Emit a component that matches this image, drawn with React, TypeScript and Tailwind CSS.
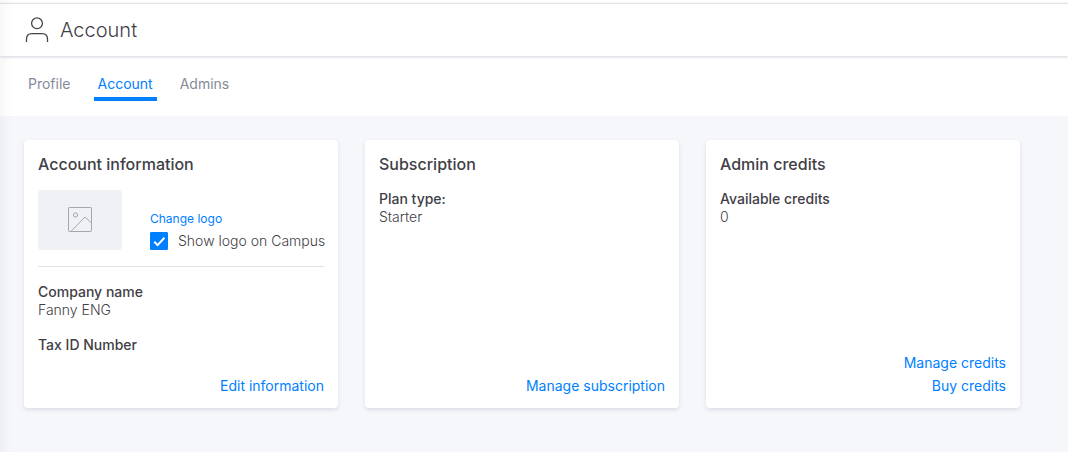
import { useState, type ReactNode } from "react";

function UserIcon() {
  return (
    <svg
      width="24"
      height="26"
      viewBox="0 0 24 26"
      fill="none"
      stroke="#43444a"
      strokeWidth="1.3"
      aria-hidden="true"
    >
      <circle cx="12" cy="6.3" r="5.4" />
      <path d="M1.5 25V22.3C1.5 18.9 3.4 16.6 6.8 16.6h10.4c3.4 0 5.3 2.3 5.3 5.7V25" />
    </svg>
  );
}

function ImageIcon() {
  return (
    <svg
      width="24"
      height="26"
      viewBox="0 0 24 26"
      fill="none"
      stroke="#a2a5b2"
      strokeWidth="1"
      aria-hidden="true"
    >
      <rect x="0.5" y="0.5" width="23" height="24" rx="0.8" />
      <circle cx="7.5" cy="8" r="2.1" />
      <path d="M3 24.3 17 10l6.5 6" />
    </svg>
  );
}

type Tab = "Profile" | "Account" | "Admins";
const tabs: Tab[] = ["Profile", "Account", "Admins"];

function Card({
  title,
  children,
  actions,
}: {
  title: string;
  children: ReactNode;
  actions: string[];
}) {
  return (
    <section className="flex min-h-[268px] flex-col rounded bg-white px-3.5 pt-3.5 pb-[11px] shadow-[0_2px_4px_rgba(30,40,80,0.12)]">
      <h2 className="mb-4 text-base leading-5 font-medium">{title}</h2>
      {children}
      <div className="mt-auto flex flex-col items-end">
        {actions.map((action) => (
          <a key={action} href="#" className="leading-[23px] font-normal text-[#0080ff]">
            {action}
          </a>
        ))}
      </div>
    </section>
  );
}

function Field({ label, value }: { label: string; value?: string }) {
  return (
    <div>
      <dt className="font-medium">{label}</dt>
      {value && <dd>{value}</dd>}
    </div>
  );
}

export default function App() {
  const [active, setActive] = useState<Tab>("Account");
  const [showLogo, setShowLogo] = useState(true);

  return (
    <div className="relative flex min-h-screen flex-col bg-[#f5f7fb] pt-[3px] font-['Inter',sans-serif] text-sm leading-[18px] font-light text-[#3f4046] before:absolute before:inset-x-0 before:top-0 before:h-[3px] before:bg-white">
      <header className="relative flex h-[53px] items-center gap-[11px] border-t border-[#dfe1e8] bg-white pl-[25px] shadow-[0_1px_3px_rgba(30,40,80,0.2)]">
        <UserIcon />
        <h1 className="text-xl leading-6 font-light">Account</h1>
      </header>

      <nav className="flex h-[60px] gap-[19px] bg-white pt-[18px] pl-6" aria-label="Account sections">
        {tabs.map((tab) => (
          <button
            key={tab}
            type="button"
            aria-current={tab === active ? "page" : undefined}
            onClick={() => setActive(tab)}
            className={
              tab === active
                ? "h-[27px] border-b-4 border-[#0080ff] px-1 pb-1 font-normal text-[#0080ff]"
                : "h-[27px] border-b-4 border-transparent px-1 pb-1 font-normal text-[#868a99]"
            }
          >
            {tab}
          </button>
        ))}
      </nav>

      <main className="grid grid-cols-3 items-start gap-[27px] pt-6 pr-12 pb-11 pl-6">
        <Card title="Account information" actions={["Edit information"]}>
          <div className="flex items-end gap-7 border-b border-[#dfe1e8] pb-4">
            <div className="flex h-[60px] w-[84px] shrink-0 items-center justify-center rounded bg-[#f0f1f4]">
              <ImageIcon />
            </div>
            <div className="flex flex-col items-start gap-1">
              <a href="#" className="text-xs leading-[18px] font-normal text-[#0080ff]">
                Change logo
              </a>
              <label className="flex items-center gap-2.5 whitespace-nowrap">
                <span className="grid size-[18px] shrink-0">
                  <input
                    type="checkbox"
                    checked={showLogo}
                    onChange={(e) => setShowLogo(e.target.checked)}
                    className="peer col-start-1 row-start-1 size-[18px] appearance-none rounded-[1px] border border-[#a2a5b2] checked:border-[#0080ff] checked:bg-[#0080ff]"
                  />
                  <svg
                    viewBox="0 0 18 18"
                    fill="none"
                    stroke="white"
                    strokeWidth="2"
                    className="pointer-events-none invisible col-start-1 row-start-1 size-[18px] peer-checked:visible"
                    aria-hidden="true"
                  >
                    <path d="M4.3 9.8 7.6 13.1 14.4 5.7" />
                  </svg>
                </span>
                Show logo on Campus
              </label>
            </div>
          </div>
          <dl className="mt-4 flex flex-col gap-[17px]">
            <Field label="Company name" value="Fanny ENG" />
            <Field label="Tax ID Number" />
          </dl>
        </Card>

        <Card title="Subscription" actions={["Manage subscription"]}>
          <dl>
            <Field label="Plan type:" value="Starter" />
          </dl>
        </Card>

        <Card title="Admin credits" actions={["Manage credits", "Buy credits"]}>
          <dl>
            <Field label="Available credits" value="0" />
          </dl>
        </Card>
      </main>

      <div className="pointer-events-none absolute inset-y-0 left-0 w-3 bg-linear-to-r from-black/3 to-transparent" />
    </div>
  );
}
